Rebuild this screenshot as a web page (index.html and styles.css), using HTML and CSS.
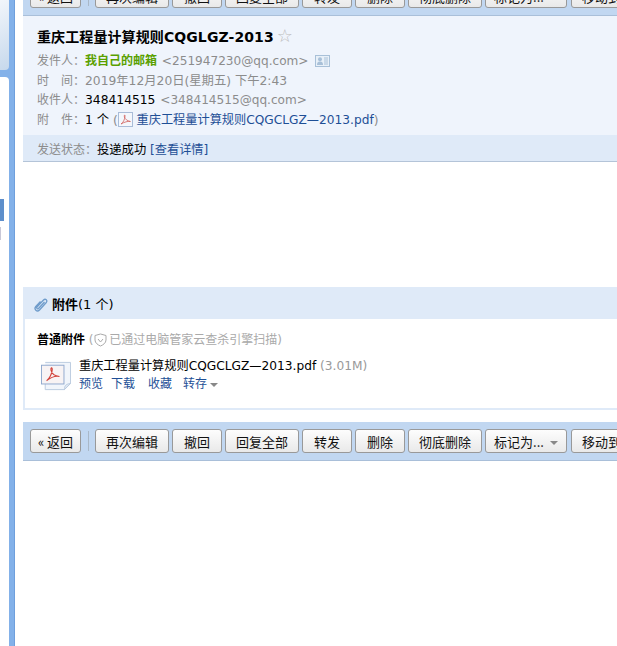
FILE: index.html
```html
<!DOCTYPE html>
<html>
<head>
    <title>重庆工程量计算规则CQGLGZ-2013</title>
    <meta charset="utf-8">
    <link rel="stylesheet" href="styles.css">
</head>

<body>

<div class="side">
    <div class="side-logo"></div>
    <div class="side-panel">
        <div class="side-current"></div>
        <div class="side-mark"></div>
    </div>
</div>

<div class="main">

    <div class="toolbar toolbar-top">
        <button class="btn btn-back">« 返回</button>
        <span class="sep"></span>
        <button class="btn">再次编辑</button>
        <button class="btn btn-short">撤回</button>
        <button class="btn">回复全部</button>
        <button class="btn btn-short">转发</button>
        <button class="btn btn-short">删除</button>
        <button class="btn">彻底删除</button>
        <button class="btn btn-more">标记为... <i class="caret"></i></button>
        <button class="btn btn-move">移动到...</button>
    </div>

    <div class="mail-head">
        <h1 class="subject">重庆工程量计算规则CQGLGZ-2013<span class="star">☆</span></h1>
        <div class="row">
            <span class="label">发件人：</span><b class="sender">我自己的邮箱</b>
            <span class="addr">&lt;251947230@qq.com&gt;</span>
            <svg class="card" width="15" height="12" viewBox="0 0 15 12">
                <rect x="0.5" y="0.5" width="14" height="11" fill="#e8f0f8" stroke="#a8c0d8"/>
                <circle cx="5" cy="4.2" r="2" fill="#a8c0d8"/>
                <path d="M2 10c0-3 1.5-3.5 3-3.5s3 .5 3 3.5z" fill="#a8c0d8"/>
                <path d="M9 3h4M9 5h4M9 7h4M9 9h4" stroke="#a8c0d8"/>
            </svg>
        </div>
        <div class="row">
            <span class="label">时　间：</span><span class="gray">2019年12月20日(星期五) 下午2:43</span>
        </div>
        <div class="row">
            <span class="label">收件人：</span><span class="dark">348414515</span>
            <span class="addr">&lt;348414515@qq.com&gt;</span>
        </div>
        <div class="row">
            <span class="label">附　件：</span><span class="dark">1 个</span>
            <span class="gray">(</span><svg class="pdf-small" width="15" height="15" viewBox="0 0 15 15">
                <rect x="0.5" y="0.5" width="14" height="14" fill="#f4f7fc" stroke="#a9bcd8"/>
                <path d="M3 12c2-1 4-5 4-8 0-2-1-1-.6 1 .5 2 3 4 6 4.500-2.500-.5-6 .5-9.400 2.500z" fill="none" stroke="#d0605c" stroke-width=".8"/>
            </svg>
            <a class="link" href="#">重庆工程量计算规则CQGCLGZ—2013.pdf</a><span class="gray">)</span>
        </div>
    </div>

    <div class="status">
        <span class="label">发送状态：</span><span class="dark">投递成功</span>
        <a class="link" href="#">[查看详情]</a>
    </div>

    <div class="mail-body"></div>

    <div class="attach">
        <div class="attach-title">
            <svg width="16" height="16" viewBox="0 0 16 16">
                <path d="M11.500 5 5.500 11.500c-1 1-2.500-.3-1.500-1.500l6.500-7c2-2 4.500.5 2.800 2.500L6.500 13c-2.500 2.500-6-.8-3.700-3.500L7.500 4.500" fill="none" stroke="#6f9ccb" stroke-width="1.300"/>
            </svg>
            <span class="attach-text"><b>附件</b>(1 个)</span>
        </div>
        <div class="attach-body">
            <div class="attach-kind">
                <b>普通附件</b>
                <span class="scan">(<svg width="13" height="14" viewBox="0 0 13 14">
                    <path d="M6.500 1 12 2.500V7c0 3-3 5-5.500 6C4 12 1 10 1 7V2.500z" fill="none" stroke="#aaa"/>
                    <path d="M4 6l2.500 3L9 6" fill="none" stroke="#aaa"/>
                </svg> 已通过电脑管家云查杀引擎扫描)</span>
            </div>
            <div class="file">
                <svg class="pdf-big" width="30" height="30" viewBox="0 0 32 32">
                    <path d="M4.500 5.500V30.500H25L31.500 24V1.500H4.500" fill="#f1f5fb" stroke="#b9c9de"/>
                    <path d="M25 30.500c0-3 .5-6 6.500-6.500L25 30.500z" fill="#dfe8f3" stroke="#b9c9de"/>
                    <rect x="0.500" y="4.500" width="24" height="20" fill="#f8f3f4" stroke="#8ea7cc"/>
                    <path d="M6 21c3-2 6-8 6-12 0-3-2-2-1.300 1 .7 3 4 6 9 6.500-4-.8-9 .7-13.700 4.500z" fill="none" stroke="#d2433c" stroke-width="1.200"/>
                </svg>
                <div class="file-info">
                    <div class="file-name">重庆工程量计算规则CQGCLGZ—2013.pdf <span class="file-size">(3.01M)</span></div>
                    <div class="file-actions">
                        <a class="link" href="#">预览</a>
                        <a class="link" href="#">下载</a>
                        <a class="link" href="#">收藏</a>
                        <a class="link" href="#">转存<i class="caret"></i></a>
                    </div>
                </div>
            </div>
        </div>
    </div>

    <div class="toolbar">
        <button class="btn btn-back">« 返回</button>
        <span class="sep"></span>
        <button class="btn">再次编辑</button>
        <button class="btn btn-short">撤回</button>
        <button class="btn">回复全部</button>
        <button class="btn btn-short">转发</button>
        <button class="btn btn-short">删除</button>
        <button class="btn">彻底删除</button>
        <button class="btn btn-more">标记为... <i class="caret"></i></button>
        <button class="btn btn-move">移动到...</button>
    </div>

</div>

</body>
</html>
```

FILE: styles.css
```css
html, body {
    margin: 0;
    height: 100%;
    overflow: hidden;
}

body {
    display: flex;
    background-color: #fff;
    font-family: "DejaVu Sans", "Noto Sans CJK SC", sans-serif;
    font-size: 12px;
    color: #000;
}

.side {
    flex: none;
    width: 15px;
    height: 646px;
    background-color: #83b1e9;
    border-right: 1px solid #6f9fdc;
    box-sizing: border-box;
    padding-right: 5px;
}

.side-logo {
    height: 70px;
    background: linear-gradient(150deg, #f2f6fb, #c6d8ec);
    border-bottom-right-radius: 4px;
}

.side-panel {
    height: 569px;
    margin-top: 7px;
    padding-top: 122px;
    box-sizing: border-box;
    background-color: #fff;
    border-top-right-radius: 4px;
}

.side-current {
    width: 4px;
    height: 22px;
    background-color: #5e8fcb;
}

.side-mark {
    width: 1px;
    height: 13px;
    margin-top: 6px;
    background-color: #c8c8d8;
}

.main {
    flex: none;
    width: 594px;
    margin-left: 8px;
    margin-top: -23px;
    overflow: hidden;
}

.toolbar {
    display: flex;
    align-items: center;
    gap: 3px;
    height: 38px;
    padding-left: 7px;
    background-color: #c1d7f1;
    border-bottom: 1px solid #a9bfd9;
    white-space: nowrap;
}

.btn {
    flex: none;
    width: 74px;
    height: 24px;
    padding: 0;
    border: 1px solid #999;
    border-radius: 3px;
    background: linear-gradient(#fdfdfd, #e9e9e9);
    font-family: "Noto Sans CJK SC", sans-serif;
    font-size: 13px;
    color: #111;
}

.btn-short {
    width: 50px;
}

.btn-back {
    width: 51px;
}

.btn-more {
    width: 82px;
    margin-right: 1px;
}

.btn-move {
    width: 72px;
}

.sep {
    flex: none;
    width: 1px;
    height: 20px;
    margin: 0 3px 0 4px;
    background-color: #a9b8c8;
}

.caret {
    display: inline-block;
    width: 0;
    height: 0;
    margin-left: 3px;
    vertical-align: middle;
    border-top: 4px solid #888;
    border-left: 4px solid transparent;
    border-right: 4px solid transparent;
}

.mail-head {
    height: 119px;
    padding: 9px 14px 0;
    box-sizing: border-box;
    background-color: #eff4fc;
}

.subject {
    margin: 0 0 4px;
    font-size: 14px;
    line-height: 22px;
    font-weight: bold;
    letter-spacing: 0.1px;
}

.star {
    margin-left: 3px;
    font-size: 18px;
    font-weight: normal;
    color: #bbb;
}

.row {
    height: 19.500px;
    line-height: 19.500px;
    white-space: nowrap;
}

.label {
    color: #8c8c8c;
}

.gray {
    color: #8c8c8c;
    font-size: 12.300px;
}

.addr {
    margin-left: 1px;
    color: #8c8c8c;
    font-size: 12.100px;
}

.sender {
    color: #5aa000;
}

.dark {
    color: #000;
    font-size: 12.300px;
}

.link {
    color: #1e4f96;
    text-decoration: none;
    font-size: 12.200px;
}

.card {
    margin-left: 3px;
    vertical-align: -2px;
}

.pdf-small {
    vertical-align: -3px;
}

.status {
    height: 27px;
    line-height: 27px;
    padding: 2px 0 0 14px;
    background-color: #dfeaf8;
    border-bottom: 1px solid #b4c4d8;
    box-sizing: border-box;
}

.mail-body {
    height: 125px;
}

.attach {
    margin-bottom: 12px;
}

.attach-title {
    display: flex;
    align-items: center;
    gap: 3px;
    height: 32px;
    padding: 4px 0 0 10px;
    box-sizing: border-box;
    background-color: #dfeaf8;
    font-size: 13px;
    line-height: 28px;
}

.attach-body {
    height: 91px;
    padding: 12px 12px 0;
    box-sizing: border-box;
    border-left: 2px solid #dfeaf8;
    border-bottom: 2px solid #dfeaf8;
}

.attach-kind {
    line-height: 18px;
}

.scan {
    color: #aaa;
}

.scan svg {
    margin-right: -1px;
    vertical-align: -3px;
}

.file {
    display: flex;
    align-items: flex-start;
    gap: 8px;
    margin-top: 8px;
    padding-left: 4px;
}

.pdf-big {
    flex: none;
    margin-top: 4px;
}

.file-name {
    font-size: 12.200px;
    line-height: 18px;
    white-space: nowrap;
}

.file-size {
    color: #999;
}

.file-actions {
    display: flex;
    gap: 8px;
    line-height: 18px;
}

.file-actions .link {
    font-size: 12px;
}

.file-actions a:nth-child(2) {
    margin-right: 5px;
}

.file-actions a:nth-child(3) {
    margin-right: 3px;
}
```
